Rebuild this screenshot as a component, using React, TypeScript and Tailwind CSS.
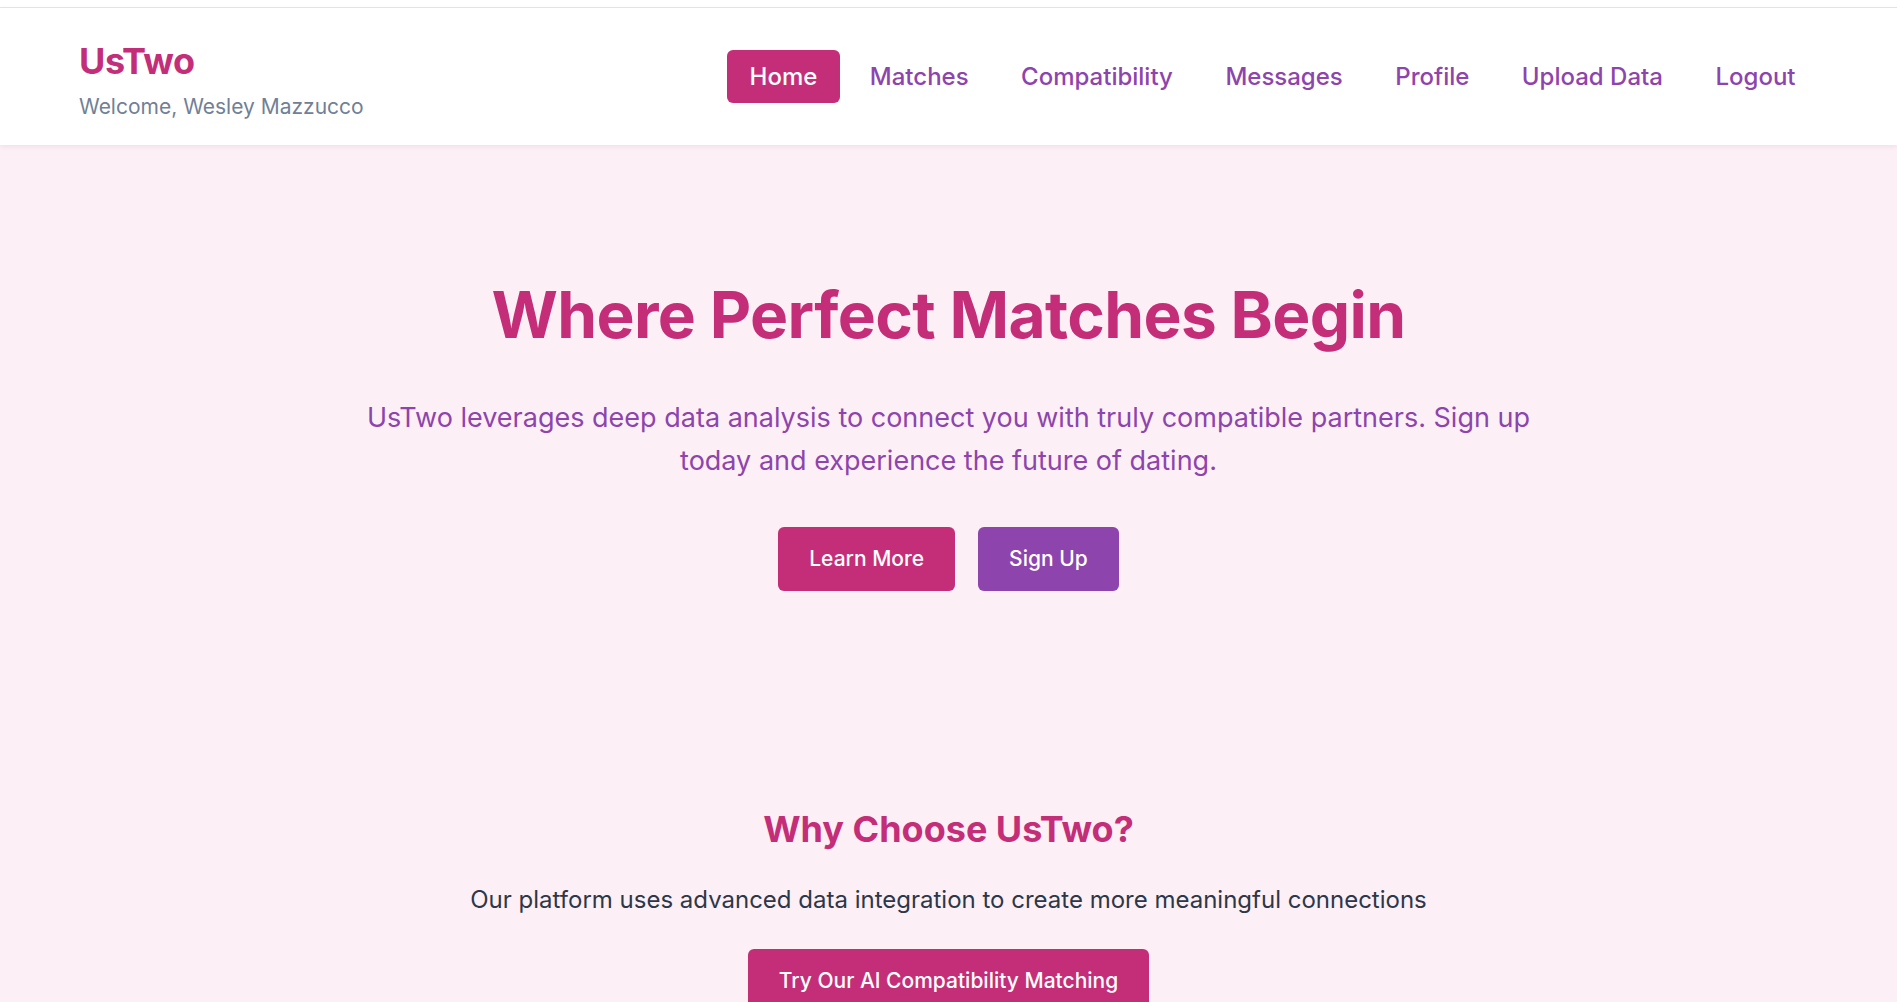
import React from "react";

const navItems = ["Home", "Matches", "Compatibility", "Messages", "Profile", "Upload Data", "Logout"];

export default function App() {
  return (
    <div
      className="min-h-screen bg-[#fcf0f6] overflow-hidden"
      style={{ fontFamily: "Inter, 'Noto Sans', sans-serif" }}
    >
      <div className="bg-white pt-[7px]">
        <header className="relative z-10 flex h-[138px] items-center justify-between border-t border-[#e3e3e3] bg-white px-[79px] shadow-[0_2px_5px_rgba(0,0,0,0.06)]">
          <div className="mt-[4px] flex flex-col">
            <div className="text-[36px] leading-[44px] font-bold tracking-[-0.012em] text-[#c42e78]">UsTwo</div>
            <div className="mt-[11px] text-[21px] leading-[25px] text-[#718096]">Welcome, Wesley Mazzucco</div>
          </div>
          <nav className="flex items-center gap-[7.5px]">
            {navItems.map((item) => (
              <a
                key={item}
                href="#"
                className={
                  item === "Home"
                    ? "rounded-[6px] bg-[#c42e78] px-[22.5px] py-[8.5px] text-[24px] leading-[36px] font-medium text-white"
                    : "rounded-[6px] px-[22.5px] py-[8.5px] text-[24px] leading-[36px] font-medium text-[#8e44ad]"
                }
              >
                {item}
              </a>
            ))}
          </nav>
        </header>
      </div>

      <main className="flex flex-col items-center pt-[131px] text-center">
        <h1 className="text-[64px] leading-[77px] font-bold tracking-[-0.01em] text-[#c42e78]">
          Where Perfect Matches Begin
        </h1>
        <p className="mt-[43px] max-w-[1200px] text-[27px] leading-[43px] text-[#8e44ad]">
          UsTwo leverages deep data analysis to connect you with truly compatible partners. Sign up today and
          experience the future of dating.
        </p>
        <div className="mt-[45px] flex justify-center gap-[23px]">
          <button className="rounded-[6px] bg-[#c42e78] px-[31px] py-[16px] text-[21px] leading-[32px] font-medium text-white">
            Learn More
          </button>
          <button className="rounded-[6px] bg-[#8e44ad] px-[31px] py-[16px] text-[21px] leading-[32px] font-medium text-white">
            Sign Up
          </button>
        </div>

        <h2 className="mt-[217px] text-[36px] leading-[43px] font-bold text-[#c42e78]">Why Choose UsTwo?</h2>
        <p className="mt-[30px] text-[24px] leading-[38px] text-[#2d3748]">
          Our platform uses advanced data integration to create more meaningful connections
        </p>
        <button className="mt-[30px] rounded-[6px] bg-[#c42e78] px-[31px] py-[16px] text-[21px] leading-[32px] font-medium text-white">
          Try Our AI Compatibility Matching
        </button>
      </main>
    </div>
  );
}
